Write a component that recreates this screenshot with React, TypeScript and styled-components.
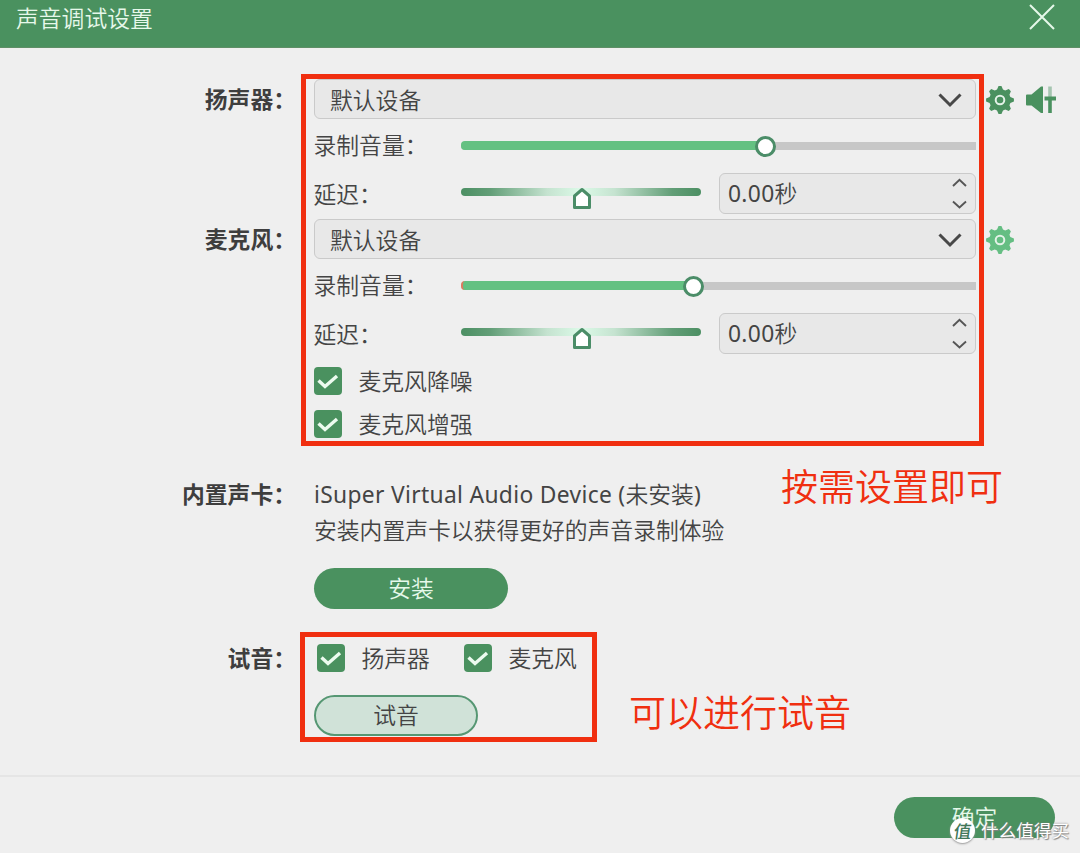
import React from "react";
import styled, { createGlobalStyle } from "styled-components";

const GREEN = "#4a915f";
const LIGHT = "#64c182";
const RED = "#f02f10";

const GlobalStyle = createGlobalStyle`
  * { box-sizing: border-box; }
  body {
    margin: 0;
    overflow: hidden;
    background: #efefef;
    color: #444;
    font-family: "Open Sans", "Noto Sans CJK SC DemiLight", "Noto Sans CJK SC", sans-serif;
    font-size: 22.8px;
    font-weight: 350;
    line-height: 30px;
  }
  button { font: inherit; padding: 0; }
`;

const Dialog = styled.div`
  position: relative;
  display: flex;
  flex-direction: column;
  width: 1080px;
  height: 853px;
  overflow: hidden;
`;

const TitleBar = styled.header`
  display: flex;
  justify-content: space-between;
  height: 48px;
  padding: 4px 25px 0 16px;
  background: ${GREEN};
  border-bottom: 1px solid #5f8f66;
  color: #e6f8ea;
`;

const CloseIcon = styled.svg`
  width: 26px;
  height: 26px;
`;

const Content = styled.main`
  flex: 1;
  padding-top: 31px;
`;

const Section = styled.section<{ $gap?: number }>`
  display: grid;
  grid-template-columns: 296px 662px auto;
  column-gap: 18px;
  margin-bottom: ${(p) => p.$gap ?? 0}px;
`;

const Label = styled.div<{ $top?: number }>`
  padding-top: ${(p) => p.$top ?? 0}px;
  text-align: right;
  font-family: "Open Sans", "Noto Sans CJK SC", sans-serif;
  font-weight: 700;
  color: #3e3e3e;
  white-space: nowrap;
`;

const Fields = styled.div`
  display: flex;
  flex-direction: column;
`;

const Select = styled.div`
  display: flex;
  align-items: center;
  justify-content: space-between;
  height: 40px;
  padding: 3px 13px 0 15px;
  border: 1.5px solid #cacaca;
  border-radius: 6px;
  background: #e8e8e8;
`;

const Row = styled.div<{ $height: number }>`
  display: flex;
  align-items: center;
  height: ${(p) => p.$height}px;
`;

const RowLabel = styled.span<{ $top?: number }>`
  width: 147px;
  padding-top: ${(p) => p.$top ?? 0}px;
  margin-left: -0.5px;
  margin-right: 0.5px;
  white-space: nowrap;
`;

const Track = styled.div`
  position: relative;
  flex: 1;
  height: 8px;
  border-radius: 4px 0 0 4px;
  background: #c7c7c7;
`;

const Fill = styled.div<{ $tip?: boolean }>`
  height: 9px;
  margin-top: -1px;
  border-radius: 4px 0 0 4px;
  background: ${LIGHT};
  border-left: ${(p) => (p.$tip ? "2px solid #dd7b60" : "0")};
`;

const Knob = styled.i`
  position: absolute;
  top: -6px;
  width: 21px;
  height: 21px;
  margin-left: -10px;
  border: 3px solid #4b8d68;
  border-radius: 50%;
  background: #fff;
`;

const DelayTrack = styled.div`
  position: relative;
  width: 240px;
  height: 8px;
  margin: -3px 18px 0 0;
  border-radius: 4px;
  background: linear-gradient(90deg, #4c8f63 0%, #629e77 12%, #c5e3d0 36%, #dcfae8 50%, #c5e3d0 64%, #629e77 88%, #4c8f63 100%);
`;

const DelayThumb = styled.svg`
  position: absolute;
  left: 110.5px;
  top: -1px;
  width: 20px;
  height: 23px;
`;

const SpinBox = styled.div`
  display: flex;
  flex: 1;
  align-items: center;
  justify-content: space-between;
  height: 41px;
  padding: 1px 8px 0;
  border: 1.5px solid #cacaca;
  border-radius: 6px;
  background: #e8e8e8;
`;

const DeviceActions = styled.div`
  display: flex;
  align-items: center;
  gap: 12px;
  height: 40px;
  margin-left: -8px;
  padding-top: 1px;
`;

const CheckLine = styled.div<{ $gap?: number; $indent?: number }>`
  display: flex;
  align-items: center;
  gap: 34px;
  height: 28px;
  margin-top: ${(p) => p.$gap ?? 0}px;
  padding-left: ${(p) => p.$indent ?? 0}px;
`;

const CheckItem = styled.label`
  display: flex;
  align-items: center;
  gap: 16.5px;
  height: 28px;
`;

const CheckText = styled.span`
  padding-top: 2px;
`;

const Pill = styled.button<{ $width: number; $outline?: boolean; $top?: number }>`
  width: ${(p) => p.$width}px;
  height: 41px;
  margin-top: ${(p) => p.$top ?? 0}px;
  padding-top: 1px;
  border: ${(p) => (p.$outline ? "2px solid #569773" : "0")};
  border-radius: 21px;
  background: ${(p) => (p.$outline ? "#d0e2d8" : GREEN)};
  color: ${(p) => (p.$outline ? "#444" : "#e6f8ea")};
`;

const TextLine = styled.div`
  height: 36px;
  white-space: nowrap;
`;

const Latin = styled.span`
  font-family: "Noto Sans", sans-serif;
  font-weight: 400;
  letter-spacing: 0.33px;
`;

const Footer = styled.footer`
  display: flex;
  justify-content: flex-end;
  height: 78px;
  padding: 20px 25px 0 0;
  border-top: 2px solid #e5e5e5;
`;

const Marker = styled.div<{ $x: number; $y: number; $w: number; $h: number }>`
  position: absolute;
  left: ${(p) => p.$x}px;
  top: ${(p) => p.$y}px;
  width: ${(p) => p.$w}px;
  height: ${(p) => p.$h}px;
  border: 5px solid ${RED};
`;

const Note = styled.div<{ $x: number; $y: number }>`
  position: absolute;
  left: ${(p) => p.$x}px;
  top: ${(p) => p.$y}px;
  color: ${RED};
  font-size: 37px;
  line-height: 48px;
  white-space: nowrap;
`;

const Watermark = styled.div`
  position: absolute;
  left: 950px;
  top: 817px;
  display: flex;
  align-items: center;
  gap: 6px;
  color: #fff;
  font-family: "Noto Sans CJK SC", sans-serif;
  font-size: 17.6px;
  font-weight: 400;
  line-height: 26px;
  white-space: nowrap;
  text-shadow: 0 0 2px #777, 1px 1px 1px #888;
`;

const Badge = styled.span`
  width: 25px;
  height: 25px;
  border-radius: 50%;
  background: #fff;
  color: #41775a;
  font-weight: 500;
  line-height: 25px;
  text-align: center;
  text-shadow: none;
  box-shadow: 0 1px 2px #999;
`;

const Slanted = styled.span`
  display: inline-block;
  transform: skewX(-8deg);
`;

const gearPoints = Array.from({ length: 8 }, (_, i) =>
  [[-16, 10.8], [-6, 14], [6, 14], [16, 10.8]].map(([offset, radius]) => {
    const angle = ((i * 45 + offset) * Math.PI) / 180;
    return `${(14 + radius * Math.cos(angle)).toFixed(2)},${(14 + radius * Math.sin(angle)).toFixed(2)}`;
  }).join(" ")
).join(" ");

const Gear = ({ color }: { color: string }) => (
  <svg width="28" height="28" viewBox="0 0 28 28">
    <polygon points={gearPoints} fill={color} />
    <circle cx="14" cy="14" r="4.3" fill="none" stroke="#e4f2e8" strokeWidth="2" />
  </svg>
);

const SpeakerMixer = () => (
  <svg width="32" height="28" viewBox="0 0 32 28">
    <path d="M0 9.5Q0 8.5 1 8.5H5.5L15 0.5H17V27H15L5.5 19.5H1Q0 19.5 0 18.5Z" fill={GREEN} />
    <path d="M24 0.5V11" stroke="#a5c5b0" strokeWidth="3.6" />
    <path d="M24 11V27" stroke={GREEN} strokeWidth="3.6" />
    <path d="M18.5 12.5H30" stroke={GREEN} strokeWidth="4" />
  </svg>
);

const Chevron = () => (
  <svg width="24" height="15" viewBox="0 0 24 15">
    <path d="M1.5 1.5L12 12L22.5 1.5" fill="none" stroke="#484848" strokeWidth="3" />
  </svg>
);

const Stepper = () => (
  <svg width="15" height="32" viewBox="0 0 15 32">
    <path d="M1 8L7.5 1.7L14 8M1 23.5L7.5 29.5L14 23.5" fill="none" stroke="#555" strokeWidth="1.9" />
  </svg>
);

const Tick = () => (
  <svg width="28" height="28" viewBox="0 0 28 28">
    <rect width="28" height="28" rx="4" fill={GREEN} />
    <path d="M4.5 13.5L11 19.5L23 9" fill="none" stroke="#ecfbef" strokeWidth="3.4" />
  </svg>
);

const Check = ({ text }: { text: string }) => (
  <CheckItem>
    <Tick />
    <CheckText>{text}</CheckText>
  </CheckItem>
);

const DeviceFields = ({ volume, tip }: { volume: number; tip?: boolean }) => (
  <>
    <Select>
      默认设备
      <Chevron />
    </Select>
    <Row $height={54}>
      <RowLabel>录制音量：</RowLabel>
      <Track>
        <Fill $tip={tip} style={{ width: volume }} />
        <Knob style={{ left: volume }} />
      </Track>
    </Row>
    <Row $height={41}>
      <RowLabel $top={2}>延迟：</RowLabel>
      <DelayTrack>
        <DelayThumb viewBox="0 0 20 23">
          <path d="M2.5 9L10 2.5L17.5 9V20.5H2.5Z" fill="#fff" stroke="#4b8d68" strokeWidth="3" strokeLinejoin="round" />
        </DelayThumb>
      </DelayTrack>
      <SpinBox>
        <span><Latin>0.00</Latin>秒</span>
        <Stepper />
      </SpinBox>
    </Row>
  </>
);

export default function App() {
  return (
    <Dialog>
      <GlobalStyle />
      <TitleBar>
        <span>声音调试设置</span>
        <CloseIcon viewBox="0 0 26 26">
          <path d="M1 1L25 25M25 1L1 25" stroke="#e6f8ea" strokeWidth="2" />
        </CloseIcon>
      </TitleBar>
      <Content>
        <Section $gap={5}>
          <Label $top={6}>扬声器：</Label>
          <Fields>
            <DeviceFields volume={304} />
          </Fields>
          <DeviceActions>
            <Gear color={GREEN} />
            <SpeakerMixer />
          </DeviceActions>
        </Section>
        <Section $gap={42}>
          <Label $top={6}>麦克风：</Label>
          <Fields>
            <DeviceFields volume={232} tip />
            <CheckLine $gap={13}><Check text="麦克风降噪" /></CheckLine>
            <CheckLine $gap={15}><Check text="麦克风增强" /></CheckLine>
          </Fields>
          <DeviceActions>
            <Gear color="#65be83" />
          </DeviceActions>
        </Section>
        <Section $gap={35}>
          <Label>内置声卡：</Label>
          <Fields>
            <TextLine><Latin>iSuper Virtual Audio Device (</Latin>未安装<Latin>)</Latin></TextLine>
            <TextLine>安装内置声卡以获得更好的声音录制体验</TextLine>
            <Pill $width={194} $top={16}>安装</Pill>
          </Fields>
        </Section>
        <Section>
          <Label>试音：</Label>
          <Fields>
            <CheckLine $indent={3}>
              <Check text="扬声器" />
              <Check text="麦克风" />
            </CheckLine>
            <Pill $width={164} $top={23} $outline>试音</Pill>
          </Fields>
        </Section>
      </Content>
      <Footer>
        <Pill $width={161}>确定</Pill>
      </Footer>
      <Marker $x={301} $y={74} $w={683} $h={372} />
      <Marker $x={300} $y={632} $w={297} $h={110} />
      <Note $x={781} $y={463}>按需设置即可</Note>
      <Note $x={629} $y={689}>可以进行试音</Note>
      <Watermark>
        <Badge><Slanted>值</Slanted></Badge>
        什么值得买
      </Watermark>
    </Dialog>
  );
}
